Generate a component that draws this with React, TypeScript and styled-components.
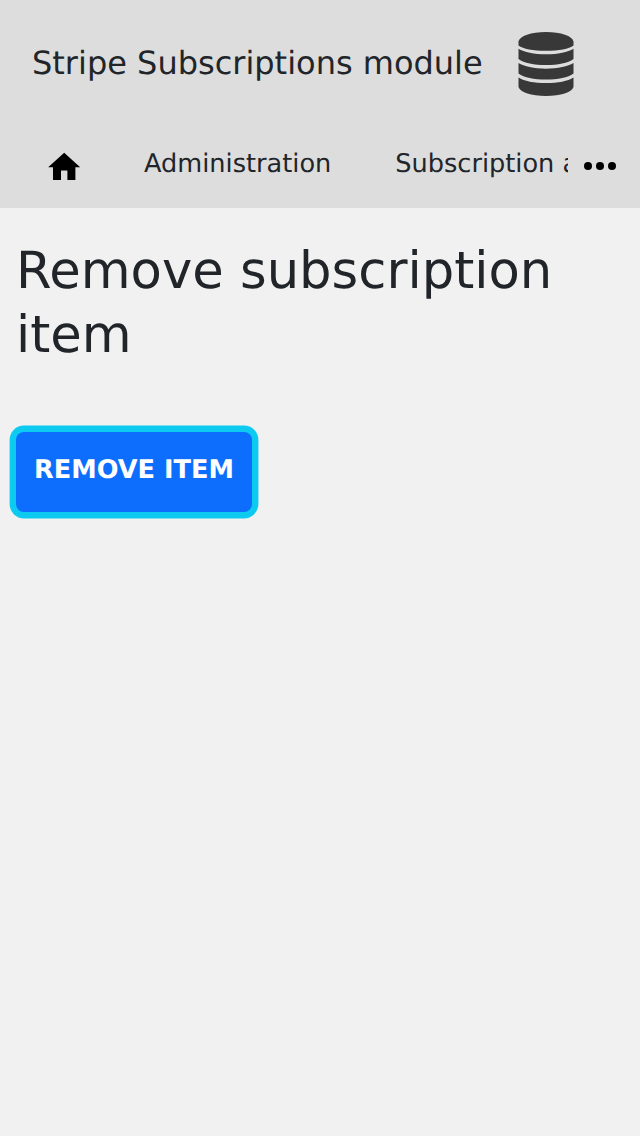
import React from 'react';
import styled, { createGlobalStyle } from 'styled-components';

const Global = createGlobalStyle`
  * { box-sizing: border-box; }
  body { margin: 0; background: #f1f1f1; color: #212529; font-family: "DejaVu Sans", sans-serif; text-rendering: geometricPrecision; }
`;
const Page = styled.div`
  min-height: 1136px;
  overflow: hidden;
`;
const Header = styled.header`
  height: 208px;
  background: #ddd;
`;
const Brand = styled.div`
  display: flex;
  height: 128px;
  align-items: center;
  padding-left: 32px;
  gap: 32px;
`;
const BrandName = styled.span`
  width: 450px;
  font-size: 32px;
  line-height: 48px;
  white-space: nowrap;
  padding-bottom: 2px;
`;
const Nav = styled.nav`
  display: flex;
  height: 80px;
`;
const Links = styled.div`
  display: flex;
  width: 568px;
  overflow: hidden;
`;
const HomeLink = styled.a`
  display: flex;
  flex: none;
  width: 112px;
  padding: 19.7px 0 0 44.8px;
`;
const NavLink = styled.a`
  flex: none;
  padding: 17px 32px 16px;
  font-size: 25.6px;
  line-height: 38px;
  white-space: nowrap;
`;
const MoreButton = styled.div`
  display: flex;
  width: 64px;
  padding: 34px 0 0 16px;
`;
const Main = styled.main`
  padding: 31px 16px;
`;
const Title = styled.h1`
  margin: 0 0 65px;
  font-size: 51.2px;
  line-height: 64px;
  font-weight: 400;
`;
const RemoveButton = styled.button`
  display: block;
  width: 236px;
  height: 80px;
  padding: 0 0 4px;
  border: 0;
  border-radius: 8px;
  background: #0d6efd;
  box-shadow: 0 0 0 6.4px #0dcaf0;
  color: #fff;
  font: bold 25.6px "DejaVu Sans", sans-serif;
  text-rendering: inherit;
  text-transform: uppercase;
  white-space: nowrap;
`;

export default function App() {
  return (
    <Page>
      <Global />
      <Header>
        <Brand>
          <BrandName>Stripe Subscriptions module</BrandName>
          <svg width="64" height="64" viewBox="0 0 64 64" fill="#383838">
            <path d="M4.5 9.6C5.6 4 17 0 32 0s26.400 4 27.500 9.600V13.500C55 17 45 18.800 32 18.800S9 17 4.500 13.500Z" />
            <path d="M4.500 16.700C10 20.200 20 22.200 32 22.200s22-2 27.500-5.500V27C54 31 44 33.100 32 33.100S10 31 4.500 27Z" />
            <path d="M4.500 31.100C10 34.600 20 36.700 32 36.700s22-2.100 27.500-5.600V41.500C54 45.500 44 47.600 32 47.600S10 45.500 4.500 41.500Z" />
            <path d="M4.500 45.400C10 49 20 51 32 51s22-2 27.500-5.600V55C57.500 60.500 47 64 32 64S6.500 60.500 4.500 55Z" />
          </svg>
        </Brand>
        <Nav>
          <Links>
            <HomeLink>
              <svg width="38.400" height="38.400" viewBox="0 0 24 24"><path d="M10 20v-6h4v6h5v-8h3L12 3 2 12h3v8z" /></svg>
            </HomeLink>
            <NavLink>Administration</NavLink>
            <NavLink>Subscription admin</NavLink>
          </Links>
          <MoreButton>
            <svg width="32" height="8" viewBox="0 0 32 8"><circle cx="4" cy="4" r="4" /><circle cx="16" cy="4" r="4" /><circle cx="28" cy="4" r="4" /></svg>
          </MoreButton>
        </Nav>
      </Header>
      <Main>
        <Title>Remove subscription item</Title>
        <RemoveButton>Remove item</RemoveButton>
      </Main>
    </Page>
  );
}
